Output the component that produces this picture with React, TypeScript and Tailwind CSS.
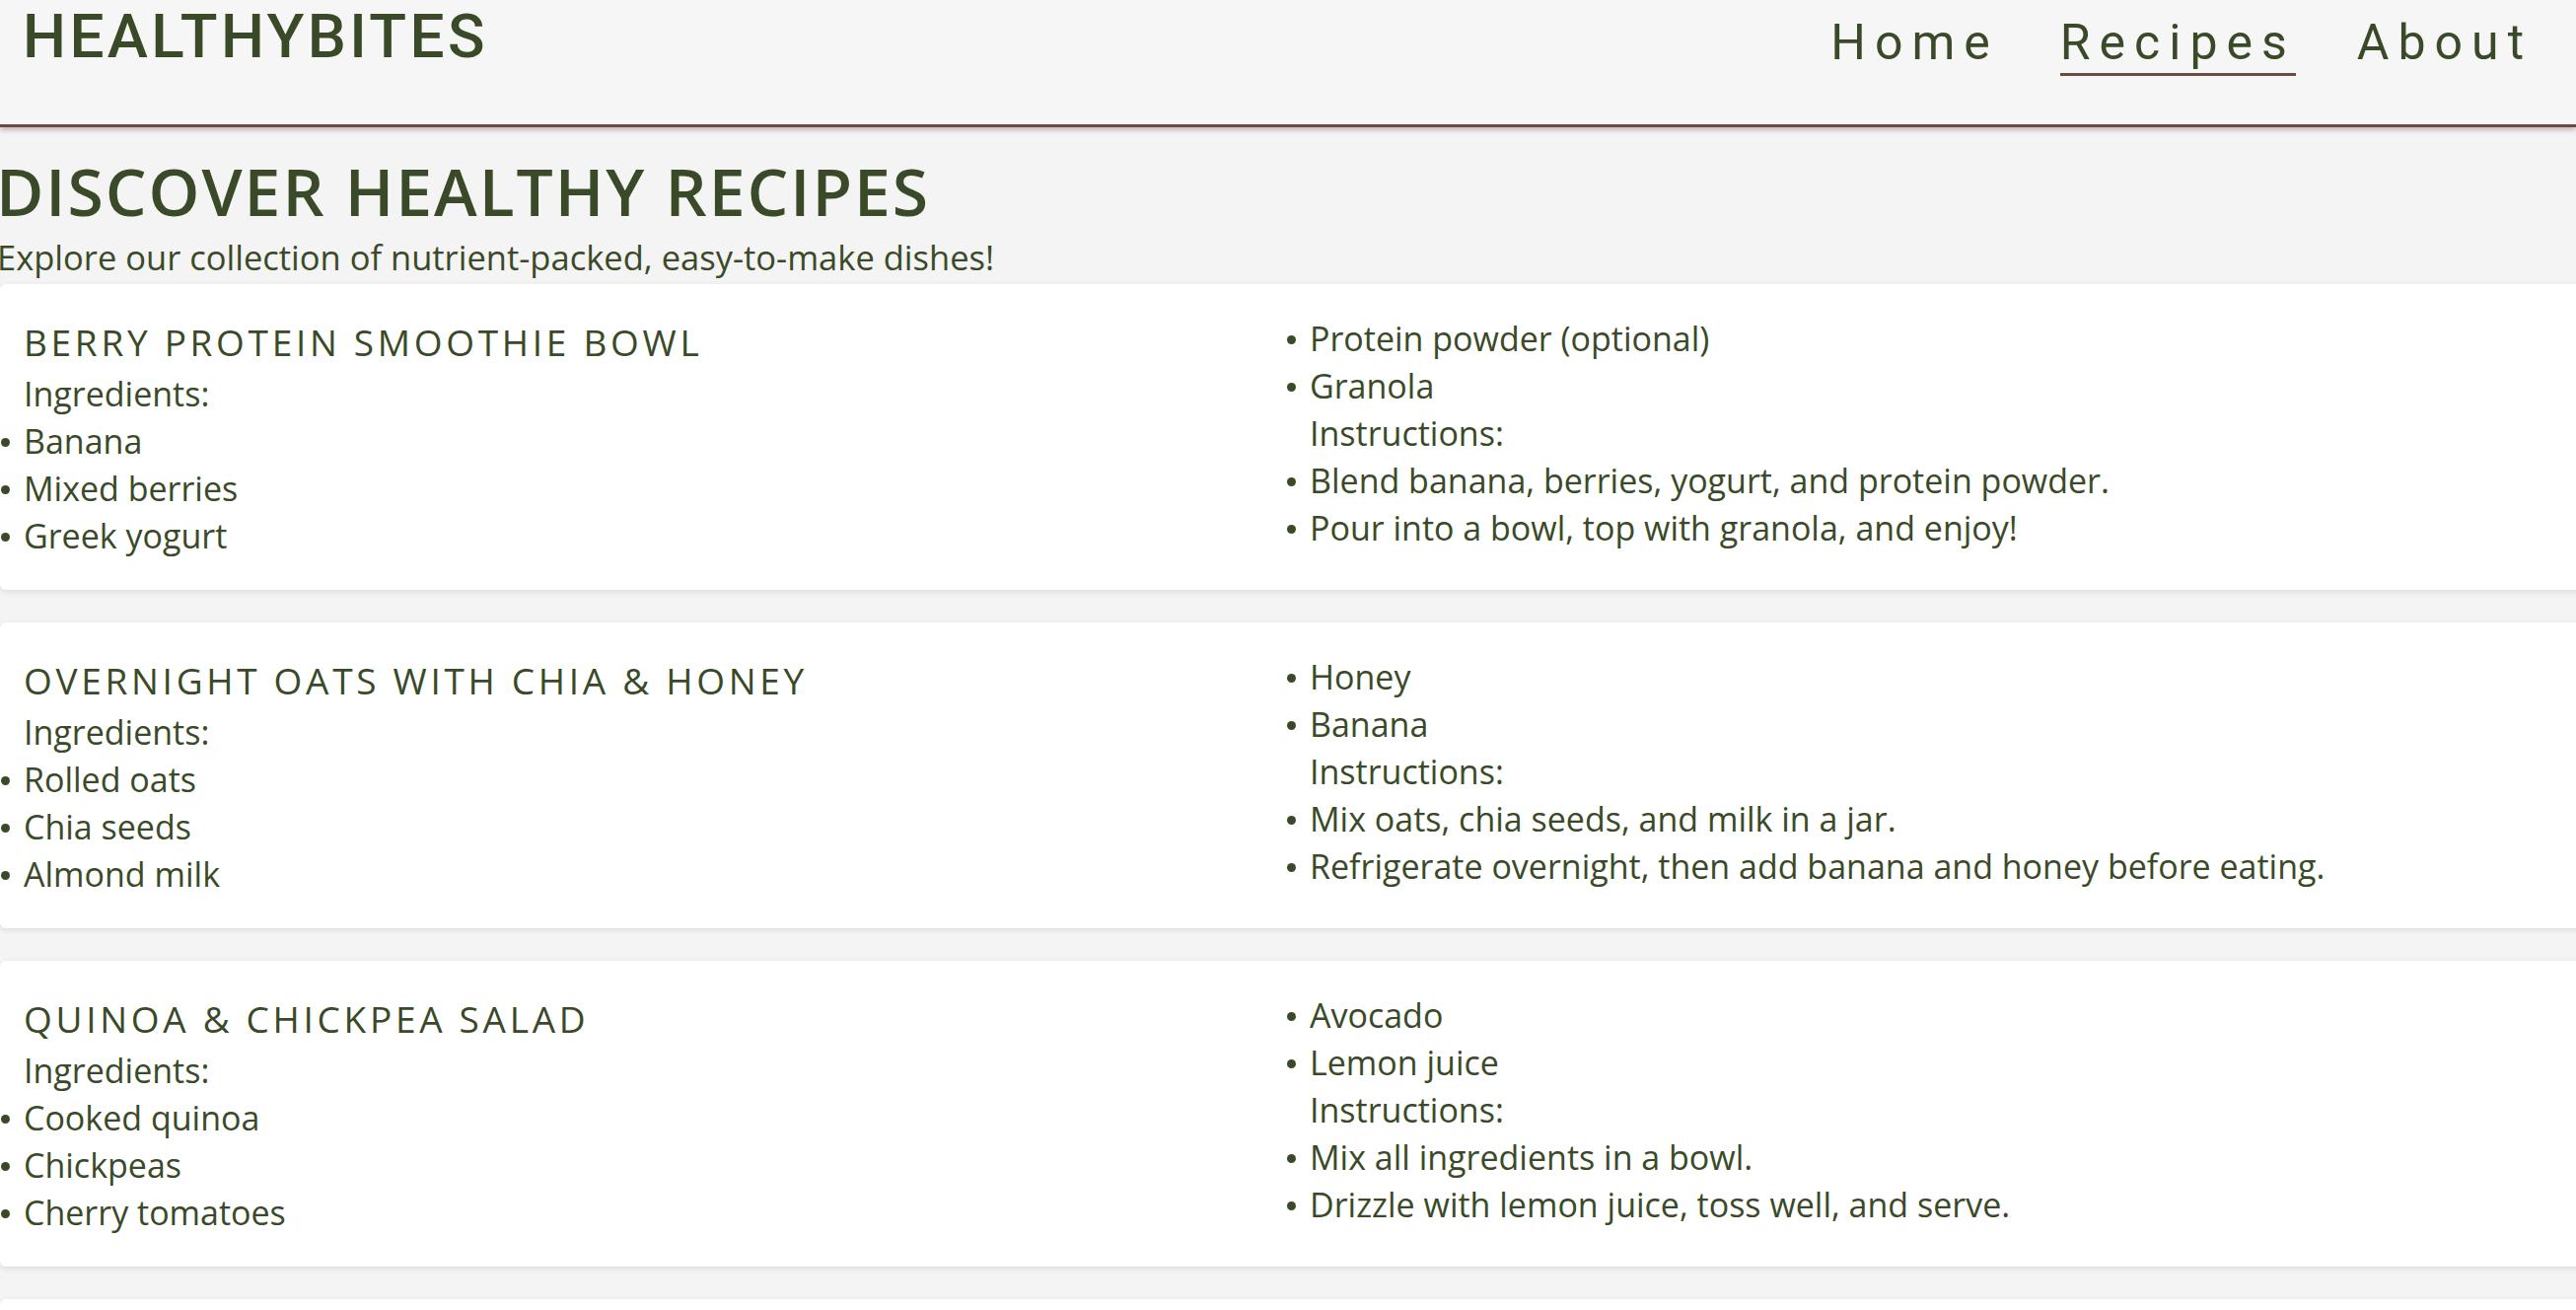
import React from "react";

type Recipe = {
  title: string;
  left: string[];
  right: { text: string; bullet: boolean }[];
};

const recipes: Recipe[] = [
  {
    title: "Berry Protein Smoothie Bowl",
    left: ["Banana", "Mixed berries", "Greek yogurt"],
    right: [
      { text: "Protein powder (optional)", bullet: true },
      { text: "Granola", bullet: true },
      { text: "Instructions:", bullet: false },
      { text: "Blend banana, berries, yogurt, and protein powder.", bullet: true },
      { text: "Pour into a bowl, top with granola, and enjoy!", bullet: true },
    ],
  },
  {
    title: "Overnight Oats with Chia & Honey",
    left: ["Rolled oats", "Chia seeds", "Almond milk"],
    right: [
      { text: "Honey", bullet: true },
      { text: "Banana", bullet: true },
      { text: "Instructions:", bullet: false },
      { text: "Mix oats, chia seeds, and milk in a jar.", bullet: true },
      { text: "Refrigerate overnight, then add banana and honey before eating.", bullet: true },
    ],
  },
  {
    title: "Quinoa & Chickpea Salad",
    left: ["Cooked quinoa", "Chickpeas", "Cherry tomatoes"],
    right: [
      { text: "Avocado", bullet: true },
      { text: "Lemon juice", bullet: true },
      { text: "Instructions:", bullet: false },
      { text: "Mix all ingredients in a bowl.", bullet: true },
      { text: "Drizzle with lemon juice, toss well, and serve.", bullet: true },
    ],
  },
];

function Line({ text, bullet }: { text: string; bullet: boolean }) {
  return (
    <div className="relative h-[48px] whitespace-nowrap leading-[48px]">
      {bullet && (
        <span className="absolute left-[-23px] top-[21px] h-[9px] w-[9px] rounded-full bg-[#3a4a28]" />
      )}
      {text}
    </div>
  );
}

function Card({ r }: { r: Recipe }) {
  return (
    <div className="mr-[-20px] rounded-md bg-white pt-[31px] pb-[31px] pl-[24px] shadow-[0_2px_6px_rgba(0,0,0,0.1)]">
      <div className="grid grid-cols-[1304px_1fr]">
        <div>
          <h3 className="h-[56px] whitespace-nowrap text-[37px] uppercase leading-[56px] tracking-[0.1em]">{r.title}</h3>
          <Line text="Ingredients:" bullet={false} />
          {r.left.map((t) => (
            <Line key={t} text={t} bullet={true} />
          ))}
        </div>
        <div>
          {r.right.map((l) => (
            <Line key={l.text} text={l.text} bullet={l.bullet} />
          ))}
        </div>
      </div>
    </div>
  );
}

export default function App() {
  return (
    <div className="min-h-screen overflow-hidden bg-[#f4f4f4] text-[34px] text-[#3a4a28] [font-family:'Open_Sans','Noto_Sans',sans-serif]">
      <header className="relative flex h-[129px] items-start justify-between border-b-[3px] border-[#6e4844] bg-[#f6f6f6] shadow-[0_3px_5px_rgba(110,72,68,0.35)] [font-family:Roboto,sans-serif]">
        <div className="pl-[23px] pt-[1px] text-[62px] font-medium leading-[72px] tracking-[0.055em]">HEALTHYBITES</div>
        <nav className="flex gap-[62px] pr-[44px] pt-[13px] text-[50px] leading-[60px] tracking-[0.18em]">
          <a className="block">Home</a>
          <a className="block border-b-[3px] border-[#6b4a46] leading-[61px]">Recipes</a>
          <a className="block">About</a>
        </nav>
      </header>
      <main>
        <h1 className="ml-[-4px] mt-[25px] h-[78px] whitespace-nowrap text-[66px] font-semibold uppercase leading-[78px] tracking-[0.03em]">
          Discover Healthy Recipes
        </h1>
        <p className="ml-[-3px] h-[56px] whitespace-nowrap text-[34.5px] leading-[58px]">
          Explore our collection of nutrient-packed, easy-to-make dishes!
        </p>
        <div className="flex flex-col gap-[33px]">
          {recipes.map((r) => (
            <Card key={r.title} r={r} />
          ))}
          <div className="mr-[-20px] h-[100px] rounded-md bg-white shadow-[0_2px_6px_rgba(0,0,0,0.1)]" />
        </div>
      </main>
    </div>
  );
}
